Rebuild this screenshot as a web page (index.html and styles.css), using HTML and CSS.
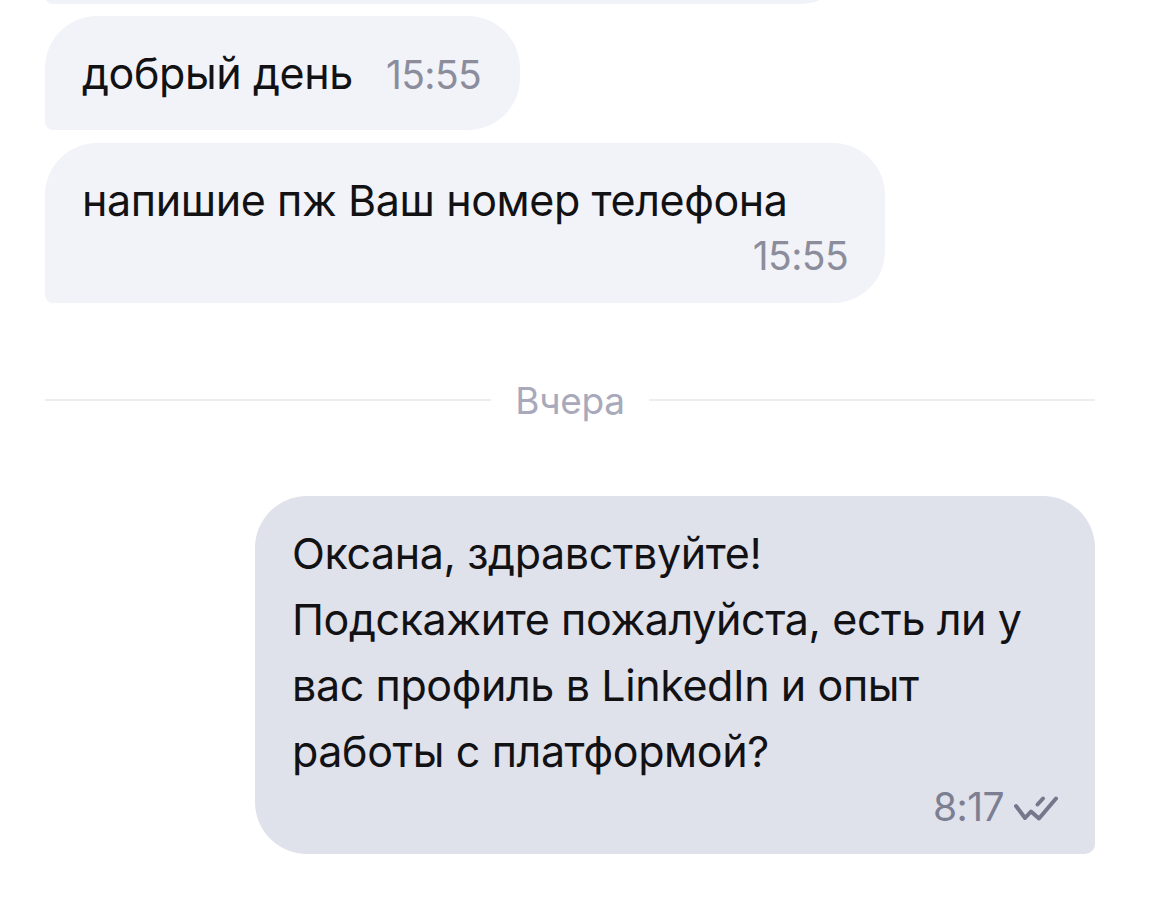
FILE: index.html
```html
<!DOCTYPE html>
<html lang="ru">
<head>
<meta charset="utf-8">
<link rel="stylesheet" href="styles.css">
</head>
<body>
<div class="chat">
  <div class="bubble in cut"></div>
  <div class="bubble in inline first">
    <span class="text">добрый день</span>
    <span class="time">15:55</span>
  </div>
  <div class="bubble in wide second">
    <div class="text">напишие пж Ваш номер телефона</div>
    <div class="meta"><span class="time">15:55</span></div>
  </div>
  <div class="divider">
    <span class="line"></span>
    <span class="label">Вчера</span>
    <span class="line"></span>
  </div>
  <div class="bubble out wide">
    <div class="text">Оксана, здравствуйте!<br>Подскажите пожалуйста, есть ли у<br>вас профиль в LinkedIn и опыт<br>работы с платформой?</div>
    <div class="meta">
      <span class="time">8:17</span>
      <svg class="check" width="44" height="26" viewBox="14 15 44 26" fill="none" stroke="currentColor" stroke-width="4" stroke-linecap="round" stroke-linejoin="round">
        <polyline points="16,26 25,38 31,31.5 39,38.5 56,18.5"/>
        <line x1="37.5" y1="24.5" x2="43" y2="18.5"/>
      </svg>
    </div>
  </div>
</div>
</body>
</html>
```
FILE: styles.css
```css
html, body {
  margin: 0;
  padding: 0;
  background: #ffffff;
}

body {
  font-family: "Inter", "Noto Sans", "Liberation Sans", sans-serif;
  color: #121214;
  overflow: hidden;
}

.chat {
  display: flex;
  flex-direction: column;
  align-items: flex-start;
  padding: 0 60px 0 45px;
}

.bubble {
  box-sizing: border-box;
  padding: 24px 37px;
  border-radius: 52px 52px 52px 8px;
}

.bubble.in {
  background: #f2f3f8;
}

.bubble.out {
  background: #dfe1eb;
  align-self: flex-end;
  border-radius: 52px 52px 10px 52px;
}

.bubble.cut {
  width: 805px;
  height: 100px;
  margin-top: -96px;
}

.bubble.first {
  margin-top: 12px;
}

.bubble.second {
  margin-top: 13px;
}

.bubble.wide {
  width: 840px;
}

.inline {
  display: flex;
  align-items: baseline;
  gap: 33px;
  padding-right: 39px;
}

.text {
  font-size: 43px;
  line-height: 66px;
  letter-spacing: -0.4px;
}

.meta {
  display: flex;
  justify-content: flex-end;
  align-items: center;
  gap: 10px;
  height: 46px;
}

.time {
  font-size: 39px;
  line-height: 46px;
  color: #8c8d9c;
  letter-spacing: -0.6px;
}

.out .time {
  color: #7c7e91;
}

.check {
  color: #75778b;
  margin-top: 2px;
}

.divider {
  align-self: stretch;
  display: flex;
  align-items: center;
  gap: 24px;
  height: 50px;
  margin: 72px 0 71px;
}

.divider .line {
  flex: 1;
  height: 2px;
  background: #ecedf1;
}

.divider .label {
  font-size: 37px;
  color: #a8a9bb;
  letter-spacing: -0.3px;
}
```
